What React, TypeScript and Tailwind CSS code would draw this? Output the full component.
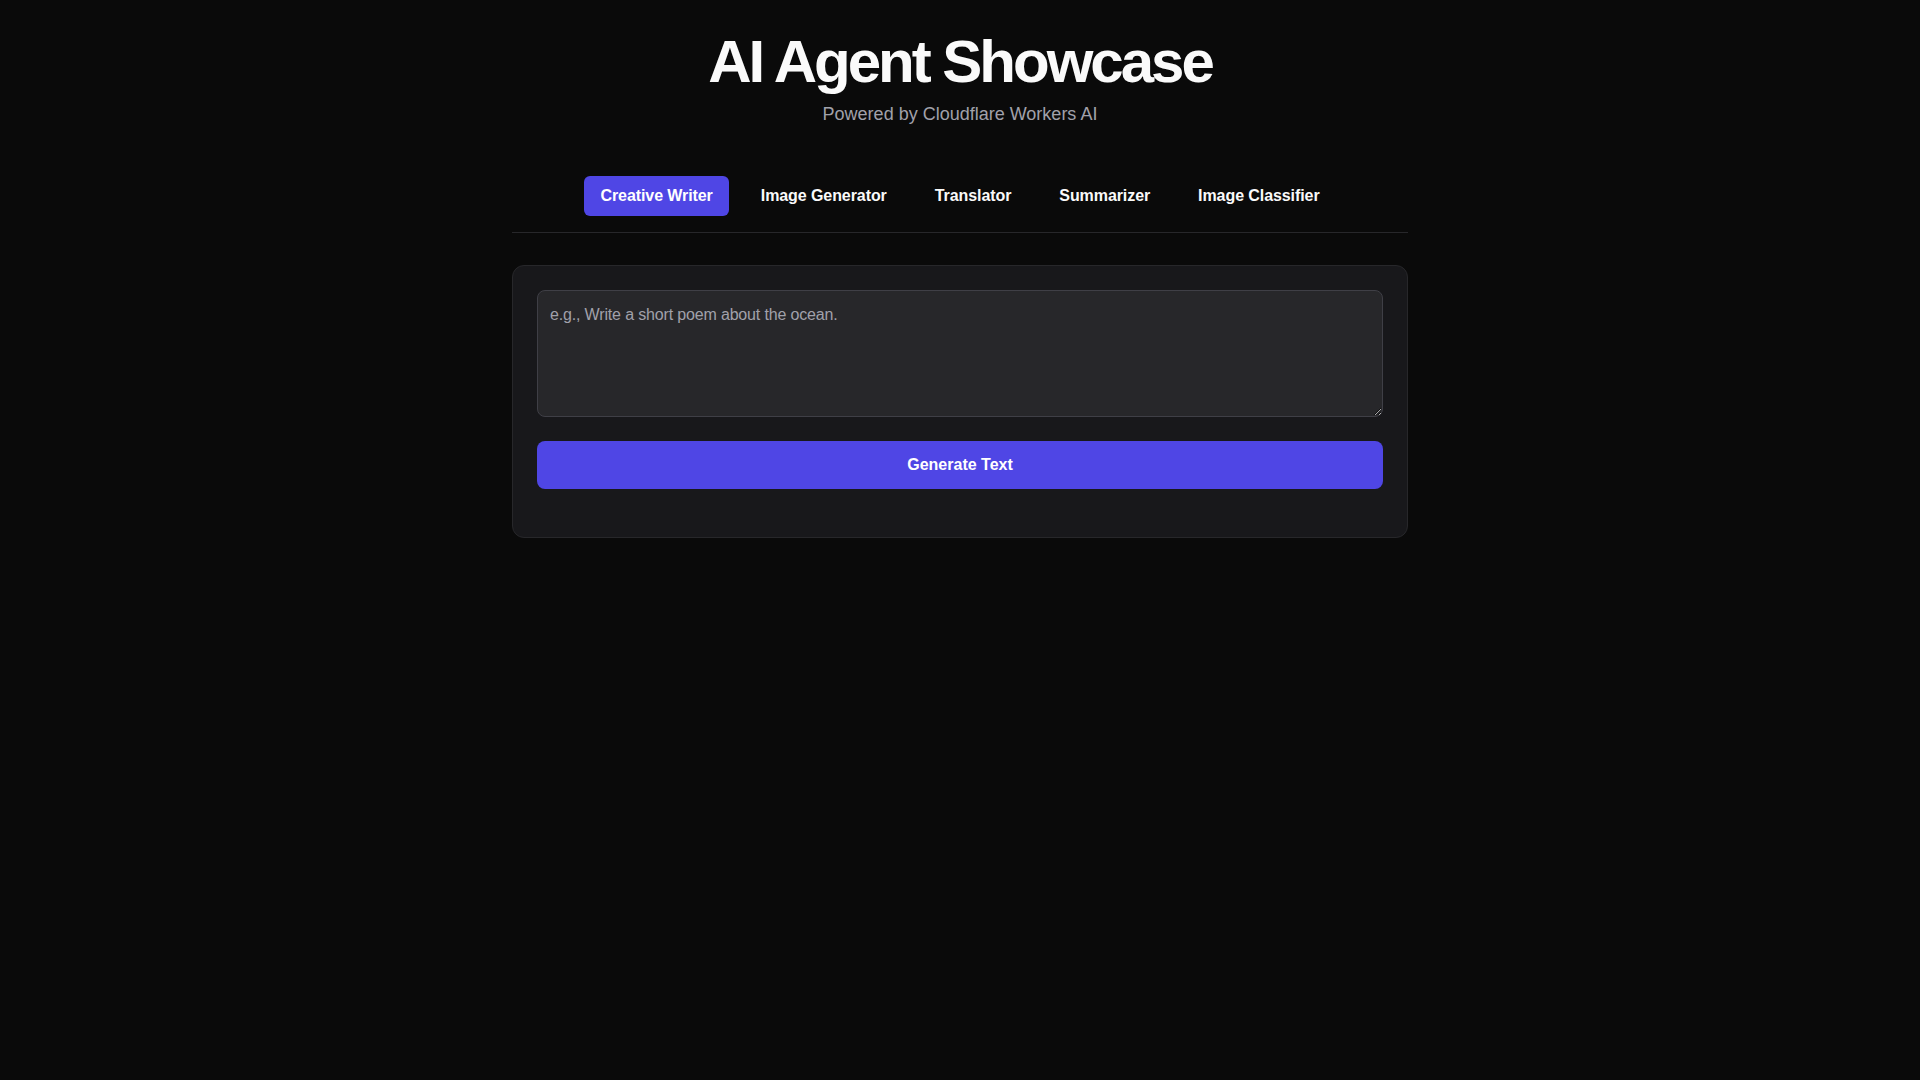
import { useState } from 'react'

const tabs = ['Creative Writer', 'Image Generator', 'Translator', 'Summarizer', 'Image Classifier']

export default function App() {
  const [active, setActive] = useState('Creative Writer')
  const [prompt, setPrompt] = useState('')

  return (
    <div className="min-h-screen bg-[#0a0a0a] text-[#fafafa] font-['Liberation_Sans',Arial,sans-serif]">
      <main className="mx-auto max-w-4xl pt-8">
        <header className="text-center">
          <h1 className="text-6xl font-bold tracking-tighter">AI Agent Showcase</h1>
          <p className="mt-2 text-lg text-[#a1a1aa]">Powered by Cloudflare Workers AI</p>
        </header>

        <nav className="mt-12 flex justify-center gap-4 border-b border-[#27272a] pb-4">
          {tabs.map((t) => (
            <button
              key={t}
              onClick={() => setActive(t)}
              className={
                t === active
                  ? 'rounded-md bg-[#4f46e5] px-4 py-2 text-base font-bold tracking-[-0.005em] text-white'
                  : 'rounded-md px-4 py-2 text-base font-bold tracking-[-0.005em] text-[#fafafa]'
              }
            >
              {t}
            </button>
          ))}
        </nav>

        <section className="mt-8 flex flex-col gap-6 rounded-xl border border-[#27272a] bg-[#18181b] p-6">
          <textarea
            value={prompt}
            onChange={(e) => setPrompt(e.target.value)}
            placeholder="e.g., Write a short poem about the ocean."
            className="h-[127px] w-full rounded-lg border border-[#3f3f46] bg-[#27272a] p-3 text-base tracking-[-0.01em] text-[#fafafa] placeholder:text-[#a1a1aa] focus:outline-none"
          />
          <button className="w-full rounded-lg bg-[#4f46e5] py-3 text-base font-bold text-white">
            Generate Text
          </button>
          <div />
        </section>
      </main>
    </div>
  )
}
